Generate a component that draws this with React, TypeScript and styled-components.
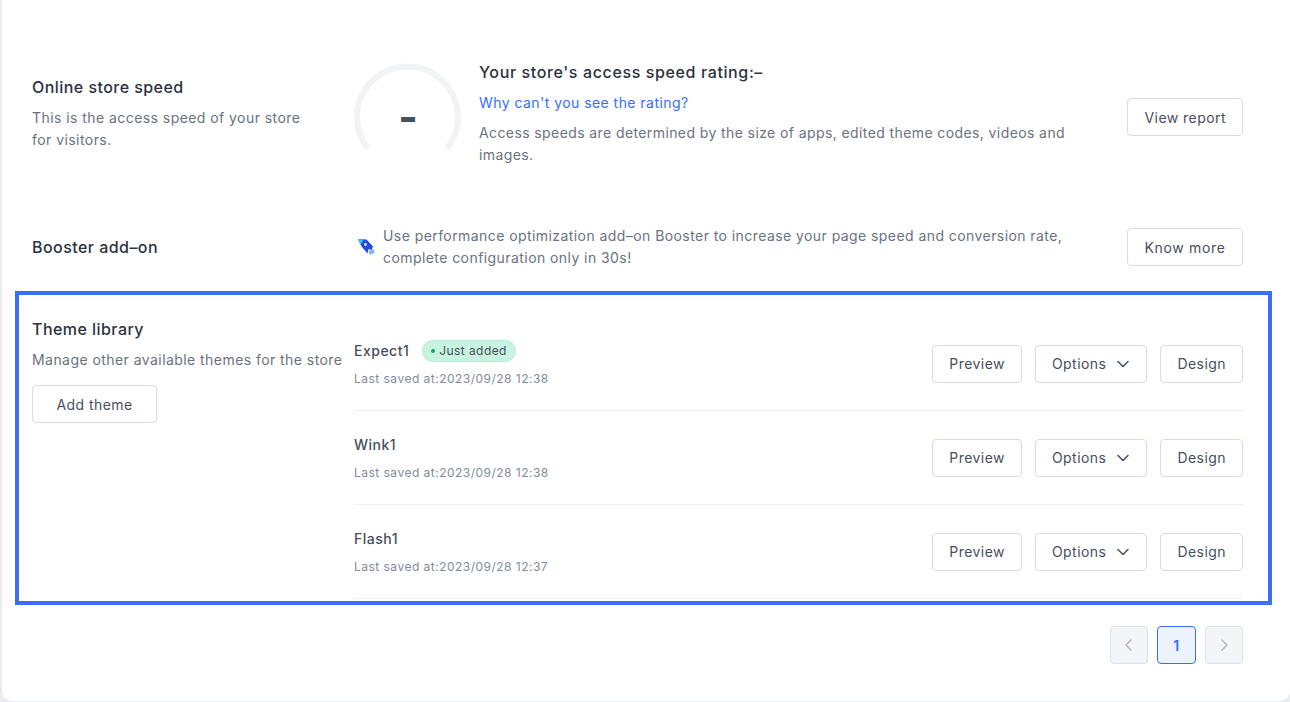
import styled, { createGlobalStyle } from "styled-components";

const GlobalStyle = createGlobalStyle`
  html, body {
    margin: 0;
    padding: 0;
    height: 702px;
    overflow: hidden;
    background: #e9edf2;
    font-family: Inter, "Noto Sans", sans-serif;
  }
`;

const Card = styled.div`
  box-sizing: border-box;
  height: 701px;
  margin-left: 2px;
  padding: 0 47px 0 30px;
  background: #fff;
  border-radius: 0 0 10px 10px;
  display: flex;
  flex-direction: column;
`;

const Section = styled.section<{ $height: number; $top: number }>`
  display: grid;
  grid-template-columns: 322px 1fr;
  align-items: center;
  height: ${props => props.$height}px;
  margin-top: ${props => props.$top}px;
`;

const SpeedSection = styled(Section)`
  align-items: start;
`;

const SpeedInfo = styled.div`
  padding-top: 15px;
`;

const Title = styled.div`
  font-size: 16px;
  line-height: 24px;
  font-weight: 500;
  letter-spacing: 0.45px;
  color: #2b3240;
`;

const Hint = styled.div`
  margin-top: 8px;
  font-size: 14px;
  line-height: 22px;
  color: #6b7280;
  letter-spacing: 0.44px;
`;

const Body = styled.div`
  display: flex;
  align-items: flex-start;
  gap: 17px;
`;

const Gauge = styled.div`
  position: relative;
  flex: none;
  width: 108px;
  height: 90px;
  margin-top: 2px;

  svg {
    display: block;
  }
`;

const GaugeValue = styled.span`
  position: absolute;
  left: 0;
  right: 0;
  top: 33px;
  text-align: center;
  font-size: 42px;
  line-height: 44px;
  font-weight: 700;
  color: #474f5e;
`;

const Rating = styled.div`
  flex: 1;
  min-width: 0;
`;

const RatingTitle = styled.div`
  font-size: 16px;
  line-height: 24px;
  font-weight: 500;
  letter-spacing: 0.62px;
  color: #2b3240;
`;

const HelpLink = styled.a`
  display: block;
  margin-top: 8px;
  font-size: 14px;
  line-height: 22px;
  color: #356dff;
  letter-spacing: 0.45px;
`;

const Copy = styled.div`
  margin-top: 8px;
  max-width: 600px;
  font-size: 14px;
  line-height: 22px;
  color: #6b7280;
  letter-spacing: 0.4px;
`;

const Button = styled.button`
  flex: none;
  box-sizing: border-box;
  height: 38px;
  padding: 0 16px;
  display: inline-flex;
  align-items: center;
  justify-content: center;
  gap: 10px;
  background: #fff;
  border: 1px solid #d7dbe7;
  border-radius: 4px;
  font-family: inherit;
  font-size: 14px;
  letter-spacing: 0.45px;
  color: #474f5e;
`;

const ReportButton = styled(Button)`
  margin-top: 38px;
`;

const KnowMoreButton = styled(Button)`
  width: 116px;
  letter-spacing: 0.65px;
`;

const AddButton = styled(Button)`
  width: 125px;
  margin-top: 14px;
`;

const BoosterBody = styled.div`
  display: flex;
  align-items: center;
  justify-content: space-between;
  padding-left: 3px;
`;

const BoosterCopy = styled.div`
  display: flex;
  align-items: center;
  gap: 8px;
`;

const BoosterText = styled.div`
  font-size: 14px;
  line-height: 22px;
  color: #6b7280;
  letter-spacing: 0.43px;
`;

const ThemeSection = styled.section`
  position: relative;
  display: grid;
  grid-template-columns: 322px 1fr;
  margin-top: 48px;
`;

const Highlight = styled.div`
  position: absolute;
  top: -26px;
  left: -17px;
  right: -29px;
  bottom: -6px;
  border: 4px solid #3a6ffb;
  pointer-events: none;
`;

const ThemeList = styled.div`
  display: flex;
  flex-direction: column;
`;

const ThemeRow = styled.div`
  box-sizing: border-box;
  height: 94px;
  display: flex;
  align-items: center;
  border-bottom: 1px solid #edeff3;
`;

const ThemeInfo = styled.div`
  flex: 1;
  min-width: 0;
`;

const ThemeName = styled.div`
  display: flex;
  align-items: center;
  gap: 13px;
  height: 22px;
  font-size: 14px;
  font-weight: 500;
  letter-spacing: 0.5px;
  color: #474f5e;
`;

const Badge = styled.span`
  box-sizing: border-box;
  height: 22px;
  padding: 0 8px;
  display: inline-flex;
  align-items: center;
  gap: 4px;
  background: #c8f3e0;
  border: 1px solid #b5eed5;
  border-radius: 11px;
  font-size: 12px;
  font-weight: 400;
  letter-spacing: 0.42px;
  color: #474f5e;
`;

const BadgeDot = styled.i`
  width: 4px;
  height: 4px;
  border-radius: 50%;
  background: #0fa56e;
`;

const SavedAt = styled.div`
  margin-top: 8px;
  font-size: 12px;
  line-height: 18px;
  color: #828a9c;
  letter-spacing: 0.48px;
`;

const RowActions = styled.div`
  display: flex;
  gap: 13px;
`;

const Pager = styled.div`
  display: flex;
  justify-content: flex-end;
  gap: 9px;
  margin-top: 27px;
`;

const PageButton = styled.button<{ $active?: boolean }>`
  box-sizing: border-box;
  width: 38.5px;
  height: 38px;
  padding: 0;
  display: flex;
  align-items: center;
  justify-content: center;
  font-family: inherit;
  font-size: 14px;
  font-weight: 600;
  border-radius: 4px;
  border: 1px solid ${props => (props.$active ? "#356dff" : "#dcdfe8")};
  background: ${props => (props.$active ? "#ebf3ff" : "#f4f5f8")};
  color: ${props => (props.$active ? "#356dff" : "#b4b9c6")};
`;

const Chevron = ({ d, color, size = 14 }: { d: string; color: string; size?: number }) => (
  <svg width={size} height={size} viewBox="0 0 14 14" fill="none">
    <path d={d} stroke={color} strokeWidth="1.5" strokeLinecap="round" strokeLinejoin="round" />
  </svg>
);

const Rocket = () => (
  <svg width="18" height="18" viewBox="0 0 18 18" fill="none">
    <path d="M1 1 L9.5 1.5 L16 8.5 L14.5 12 L11.5 11 L10.5 15.5 L4.5 8.5 Z" fill="#2748e0" />
    <path d="M1 1 L6.5 1.3 L3.5 7.5 Z" fill="#35c3f5" />
    <path d="M11.5 13.5 L16.5 11 L17.5 14.5 L13 17 Z" fill="#7fb4f8" />
    <circle cx="8.5" cy="6.5" r="1.4" fill="#dfe9ff" />
  </svg>
);

const themes = [
  { name: "Expect1", saved: "2023/09/28 12:38", isNew: true },
  { name: "Wink1", saved: "2023/09/28 12:38" },
  { name: "Flash1", saved: "2023/09/28 12:37" },
];

export default function App() {
  return (
    <>
      <GlobalStyle />
      <Card>
        <SpeedSection $height={114} $top={60}>
          <SpeedInfo>
            <Title>Online store speed</Title>
            <Hint>
              This is the access speed of your store
              <br />
              for visitors.
            </Hint>
          </SpeedInfo>
          <Body>
            <Gauge>
              <svg width="108" height="90" viewBox="0 0 108 90" fill="none">
                <path
                  d="M12.5 84.5 A50.5 50.5 0 1 1 94.5 84.5"
                  stroke="#f2f3f5"
                  strokeWidth="6"
                  strokeLinecap="round"
                />
              </svg>
              <GaugeValue>-</GaugeValue>
            </Gauge>
            <Rating>
              <RatingTitle>Your store's access speed rating:–</RatingTitle>
              <HelpLink>Why can't you see the rating?</HelpLink>
              <Copy>Access speeds are determined by the size of apps, edited theme codes, videos and images.</Copy>
            </Rating>
            <ReportButton>View report</ReportButton>
          </Body>
        </SpeedSection>

        <Section $height={44} $top={51}>
          <Title>Booster add–on</Title>
          <BoosterBody>
            <BoosterCopy>
              <Rocket />
              <BoosterText>
                Use performance optimization add–on Booster to increase your page speed and conversion rate,
                <br />
                complete configuration only in 30s!
              </BoosterText>
            </BoosterCopy>
            <KnowMoreButton>Know more</KnowMoreButton>
          </BoosterBody>
        </Section>

        <ThemeSection>
          <Highlight />
          <div>
            <Title>Theme library</Title>
            <Hint>Manage other available themes for the store</Hint>
            <AddButton>Add theme</AddButton>
          </div>
          <ThemeList>
            {themes.map(theme => (
              <ThemeRow key={theme.name}>
                <ThemeInfo>
                  <ThemeName>
                    {theme.name}
                    {theme.isNew && (
                      <Badge>
                        <BadgeDot />
                        Just added
                      </Badge>
                    )}
                  </ThemeName>
                  <SavedAt>Last saved at:{theme.saved}</SavedAt>
                </ThemeInfo>
                <RowActions>
                  <Button>Preview</Button>
                  <Button>
                    Options
                    <Chevron d="M2 4.5 L7 9.5 L12 4.5" color="#474f5e" />
                  </Button>
                  <Button>Design</Button>
                </RowActions>
              </ThemeRow>
            ))}
          </ThemeList>
        </ThemeSection>

        <Pager>
          <PageButton>
            <Chevron d="M9 2 L4 7 L9 12" color="#b4b9c6" />
          </PageButton>
          <PageButton $active>1</PageButton>
          <PageButton>
            <Chevron d="M5 2 L10 7 L5 12" color="#b4b9c6" />
          </PageButton>
        </Pager>
      </Card>
    </>
  );
}
